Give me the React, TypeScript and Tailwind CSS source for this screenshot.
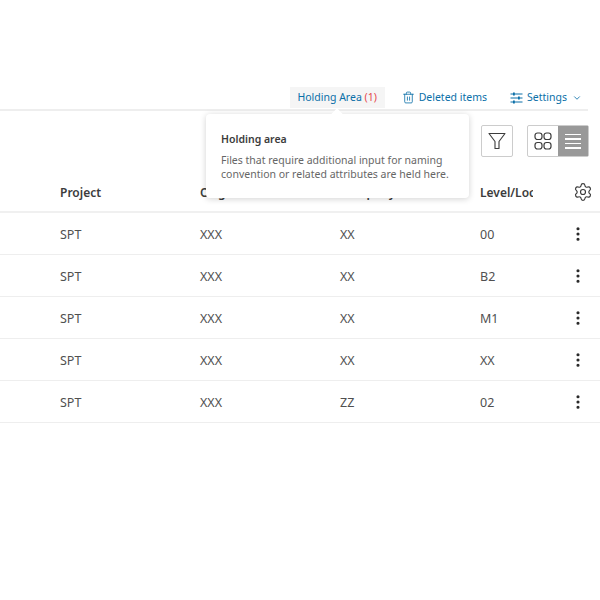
import { Trash2, ChevronDown, Settings, EllipsisVertical } from 'lucide-react'

const rows = [
  ['SPT', 'XXX', 'XX', '00'],
  ['SPT', 'XXX', 'XX', 'B2'],
  ['SPT', 'XXX', 'XX', 'M1'],
  ['SPT', 'XXX', 'XX', 'XX'],
  ['SPT', 'XXX', 'ZZ', '02'],
]

const cols = 'grid grid-cols-[60px_140px_140px_140px_53px_1fr] items-center'

export default function App() {
  return (
    <div className="relative w-[600px] h-[600px] bg-white pt-[87px] text-[12px] text-[#3c3c3c] font-['Noto_Sans','Open_Sans',sans-serif] overflow-hidden">
      {/* Tabs */}
      <div className="w-[588px] h-[24px] border-b-2 border-[#eeeeee] flex justify-end items-start text-[#0a6fa8] text-[10.5px]">
        <div className="h-[21px] w-[95px] mr-[17px] bg-[#f5f5f5] flex items-center justify-center">
          <span>Holding Area <span className="text-[#e5484d]">(1)</span></span>
        </div>
        <div className="h-[21px] flex items-center mr-[23px]">
          <Trash2 size={13} strokeWidth={1.5} className="mr-[4px]" />
          <span>Deleted items</span>
        </div>
        <div className="h-[21px] flex items-center mr-[6px]">
          <svg width="13" height="12" viewBox="0 0 13 12" fill="none" stroke="currentColor" strokeWidth="1" className="mr-[4px]">
            <path d="M0.5 2H12.5M0.5 6H12.5M0.5 10H12.5" />
            <rect x="3" y="0.5" width="1.8" height="3" fill="currentColor" stroke="none" />
            <rect x="8" y="4.5" width="1.8" height="3" fill="currentColor" stroke="none" />
            <rect x="3" y="8.5" width="1.8" height="3" fill="currentColor" stroke="none" />
          </svg>
          <span>Settings</span>
          <ChevronDown size={10} className="ml-[5px]" />
        </div>
      </div>

      {/* Toolbar */}
      <div className="w-[589px] h-[46px] pt-[14px] flex justify-end items-start">
        <button className="w-[32px] h-[32px] mr-[14px] border border-[#cccccc] rounded-[2px] flex items-center justify-center text-[#3c3c3c]">
          <svg width="18" height="18" viewBox="0 0 18 18" fill="none" stroke="currentColor" strokeWidth="1.1" strokeLinejoin="round">
            <path d="M1 1.5H17L11 9.5V16.5H7V9.5Z" />
          </svg>
        </button>
        <div className="w-[62px] h-[32px] border border-[#cccccc] rounded-[2px] flex">
          <div className="flex-1 flex items-center justify-center">
            <svg width="18" height="18" viewBox="0 0 18 18" fill="none" stroke="#3c3c3c" strokeWidth="1.2">
              <rect x="1" y="1" width="7" height="6.5" rx="2.5" />
              <rect x="10" y="1" width="7" height="6.5" rx="2.5" />
              <rect x="1" y="10.5" width="7" height="6.5" rx="2.5" />
              <rect x="10" y="10.5" width="7" height="6.5" rx="2.5" />
            </svg>
          </div>
          <div className="w-[30px] bg-[#999999] flex flex-col items-center justify-center gap-[3px]">
            <div className="w-[16px] h-[1.5px] bg-white" />
            <div className="w-[16px] h-[1.5px] bg-white" />
            <div className="w-[16px] h-[1.5px] bg-white" />
            <div className="w-[16px] h-[1.5px] bg-white" />
          </div>
        </div>
      </div>

      {/* Table */}
      <div className={`${cols} h-[56px] pt-[17px] border-b-2 border-[#f0f0f0] font-semibold text-[#3c3c3c]`}>
        <div />
        <div>Project</div>
        <div>Originator</div>
        <div>Company</div>
        <div className="overflow-hidden whitespace-nowrap">Level/Location</div>
        <div className="flex justify-end pr-[7px] -mt-[2px]">
          <Settings size={20} strokeWidth={1.4} />
        </div>
      </div>
      {rows.map((r, i) => (
        <div key={i} className={`${cols} h-[42px] border-b border-[#eeeeee] text-[#505050] text-[12.5px]`}>
          <div />
          <div className="pt-[3px]">{r[0]}</div>
          <div className="pt-[3px]">{r[1]}</div>
          <div className="pt-[3px]">{r[2]}</div>
          <div className="pt-[3px]">{r[3]}</div>
          <div className="flex justify-end pr-[15px] text-[#2a2a2a]">
            <EllipsisVertical size={18} strokeWidth={2.2} className="-mr-[2px]" />
          </div>
        </div>
      ))}

      {/* Tooltip */}
      <div className="absolute left-[206px] top-[114px] w-[263px] h-[84px] bg-white rounded-[4px] shadow-[0_1px_6px_rgba(0,0,0,0.18)] px-[15px] pt-[16px]">
        <div className="absolute -top-[4px] left-[127px] w-[8px] h-[8px] bg-white rotate-45" />
        <div className="font-semibold text-[10.5px] text-[#3c3c3c] leading-[18px]">Holding area</div>
        <p className="mt-[5px] text-[10.5px] leading-[14px] text-[#666666]">
          Files that require additional input for naming<br />
          convention or related attributes are held here.
        </p>
      </div>
    </div>
  )
}
